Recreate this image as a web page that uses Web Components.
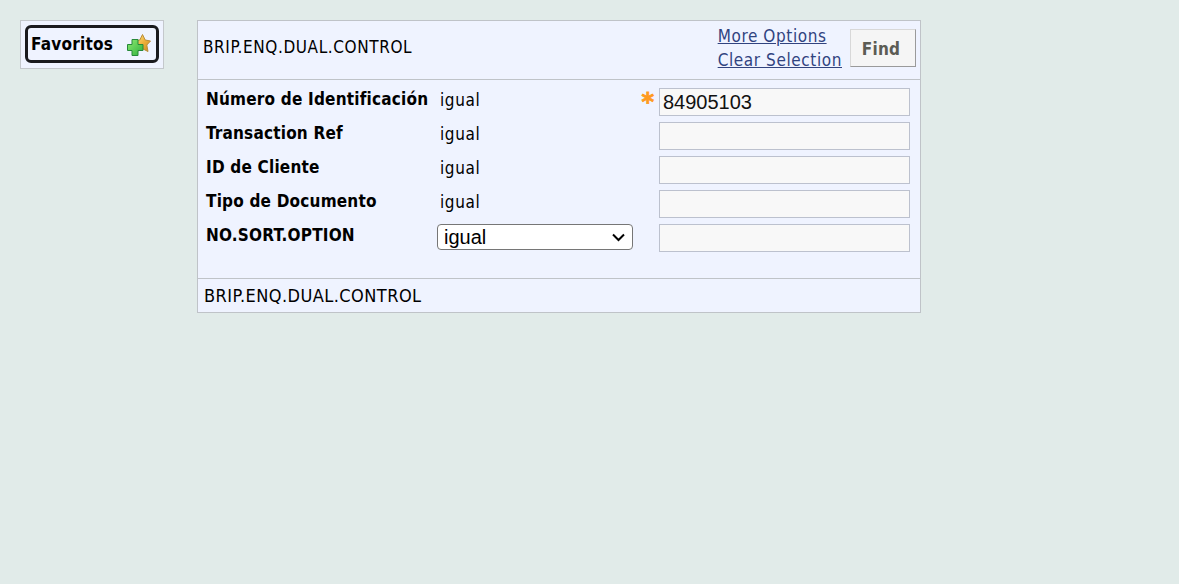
<!DOCTYPE html>
<html lang="es">
<head>
<meta charset="utf-8">
<title>BRIP.ENQ.DUAL.CONTROL</title>
<style>
  html, body { margin: 0; height: 100%; }
  body {
    background: #e1ebe9;
    font-family: "DejaVu Sans Condensed", "DejaVu Sans", sans-serif;
    color: #000;
    display: flex;
    align-items: flex-start;
    gap: 33px;
    padding: 20px;
    box-sizing: border-box;
  }
</style>
</head>
<body>
<fav-button>Favoritos</fav-button>
<enq-panel title-text="BRIP.ENQ.DUAL.CONTROL">
  <enq-row label="Número de Identificación" value="84905103" required></enq-row>
  <enq-row label="Transaction Ref"></enq-row>
  <enq-row label="ID de Cliente"></enq-row>
  <enq-row label="Tipo de Documento"></enq-row>
  <enq-row label="NO.SORT.OPTION" selectable></enq-row>
</enq-panel>

<script>
class FavButton extends HTMLElement {
  constructor() {
    super();
    this.attachShadow({ mode: "open" });
  }

  connectedCallback() {
    this.shadowRoot.innerHTML = `
      <style>
        :host {
          display: block;
          width: 144px;
          height: 49px;
          box-sizing: border-box;
          border: 1px solid #c4c8cc;
          background: #eff3ff;
          padding: 4px;
        }
        .btn {
          height: 38px;
          box-sizing: border-box;
          border: 3px solid #1a1a1e;
          border-radius: 6px;
          display: flex;
          align-items: center;
          justify-content: space-between;
          padding: 0 5px 1px 3px;
          font-size: 17px;
          font-weight: bold;
          letter-spacing: .25px;
        }
        svg { display: block; margin-top: 3px; }
      </style>
      <div class="btn">
        <span><slot></slot></span>
        <svg width="24" height="22" viewBox="0 0 24 22">
          <defs>
            <linearGradient id="st" x1="0" y1="0" x2="1" y2="1">
              <stop offset="0" stop-color="#ffe890"/>
              <stop offset=".5" stop-color="#eeb23c"/>
              <stop offset="1" stop-color="#c9861c"/>
            </linearGradient>
            <linearGradient id="pl" x1="0" y1="0" x2="1" y2="1">
              <stop offset="0" stop-color="#8eea72"/>
              <stop offset="1" stop-color="#2eb03c"/>
            </linearGradient>
          </defs>
          <path d="M15.500 .5L18.200 6 23.500 7 19.800 11 21 17.500 15.500 14.700 10 17.500 11.200 11 7.500 7 12.800 6z" fill="url(#st)" stroke="#b98c38" stroke-width="1" stroke-linejoin="round"/>
          <path d="M5 5.500h6v5h5v6h-5v5h-6v-5h-4.500v-6h4.500z" fill="url(#pl)" stroke="#27893a" stroke-width="1" stroke-linejoin="round"/>
        </svg>
      </div>
    `;
  }
}

class EnqPanel extends HTMLElement {
  constructor() {
    super();
    this.attachShadow({ mode: "open" });
  }

  connectedCallback() {
    const title = this.getAttribute("title-text") || "";

    this.shadowRoot.innerHTML = `
      <style>
        :host {
          display: block;
          width: 724px;
          height: 293px;
          box-sizing: border-box;
          border: 1px solid #bfc3c8;
          background: #eff3ff;
          font-size: 17px;
          letter-spacing: .6px;
        }
        .head {
          height: 59px;
          box-sizing: border-box;
          border-bottom: 1px solid #bfc3c8;
          display: flex;
          align-items: center;
          padding: 0 4px 5px 5px;
        }
        .head .name { flex: 1; padding-bottom: 2px; }
        .links {
          display: flex;
          flex-direction: column;
          gap: 4px;
          margin-right: 8px;
          font-size: 17px;
        }
        a { color: #31437f; text-decoration: underline; line-height: 20px; }
        .find {
          width: 66px;
          height: 38px;
          box-sizing: border-box;
          border: 1px solid;
          border-color: #d8d8d8 #9a9a9a #9a9a9a #d8d8d8;
          background: #f5f5f5;
          color: #5c5c54;
          font: bold 17px "DejaVu Sans Condensed", "DejaVu Sans", sans-serif;
          letter-spacing: .2px;
          padding: 2px 4px 0 0;
        }
        .rows {
          height: 198px;
          box-sizing: border-box;
          padding: 8px 10px 0 8px;
          display: flex;
          flex-direction: column;
          gap: 6px;
        }
        .foot {
          height: 34px;
          box-sizing: border-box;
          border-top: 1px solid #bfc3c8;
          display: flex;
          align-items: center;
          padding-left: 6px;
          font-size: 18px;
          letter-spacing: .45px;
        }
      </style>
      <div class="head">
        <span class="name">${title}</span>
        <div class="links">
          <a href="#">More Options</a>
          <a href="#">Clear Selection</a>
        </div>
        <button class="find">Find</button>
      </div>
      <div class="rows"><slot></slot></div>
      <div class="foot">${title}</div>
    `;
  }
}

class EnqRow extends HTMLElement {
  constructor() {
    super();
    this.attachShadow({ mode: "open" });
  }

  connectedCallback() {
    const label = this.getAttribute("label") || "";
    const value = this.getAttribute("value") || "";
    const op = this.hasAttribute("selectable")
      ? `<select><option>igual</option></select>`
      : `<span class="op">igual</span>`;
    const mark = this.hasAttribute("required") ? `<span class="req">*</span>` : "";
    const chevron = "data:image/svg+xml," + encodeURIComponent(
      '<svg xmlns="http://www.w3.org/2000/svg" width="14" height="9"><path d="M1 1.500l5.500 5.500 5.500-5.500" fill="none" stroke="#000" stroke-width="2"/></svg>'
    );

    this.shadowRoot.innerHTML = `
      <style>
        :host {
          display: grid;
          grid-template-columns: 231px 196px 26px 251px;
          height: 28px;
          font-size: 17px;
        }
        .label { font-weight: bold; letter-spacing: .2px; line-height: 23px; }
        .op { padding-left: 3px; line-height: 24px; }
        select {
          appearance: none;
          width: 196px;
          height: 26px;
          box-sizing: border-box;
          background: #fff url("${chevron}") no-repeat 174px 8px;
          border: 1px solid #767676;
          border-radius: 4px;
          font: 20px "Liberation Sans", Arial, sans-serif;
          letter-spacing: 0;
          color: #000;
          padding: 0 0 0 6px;
        }
        .mark { display: flex; justify-content: flex-end; padding-right: 5px; }
        .req {
          color: #ff9a1f;
          font: bold 24px/28px "DejaVu Sans", sans-serif;
          letter-spacing: 0;
          -webkit-text-stroke: .8px #ff9a1f;
        }
        input {
          box-sizing: border-box;
          width: 251px;
          height: 28px;
          border: 1px solid #bcc1ce;
          background: #f8f8f8;
          padding: 0 3px;
          font: 20px "Liberation Sans", Arial, sans-serif;
          letter-spacing: 0;
          color: #111;
        }
      </style>
      <span class="label">${label}</span>
      <div>${op}</div>
      <div class="mark">${mark}</div>
      <input type="text" value="${value}">
    `;
  }
}

customElements.define("fav-button", FavButton);
customElements.define("enq-panel", EnqPanel);
customElements.define("enq-row", EnqRow);
</script>
</body>
</html>
